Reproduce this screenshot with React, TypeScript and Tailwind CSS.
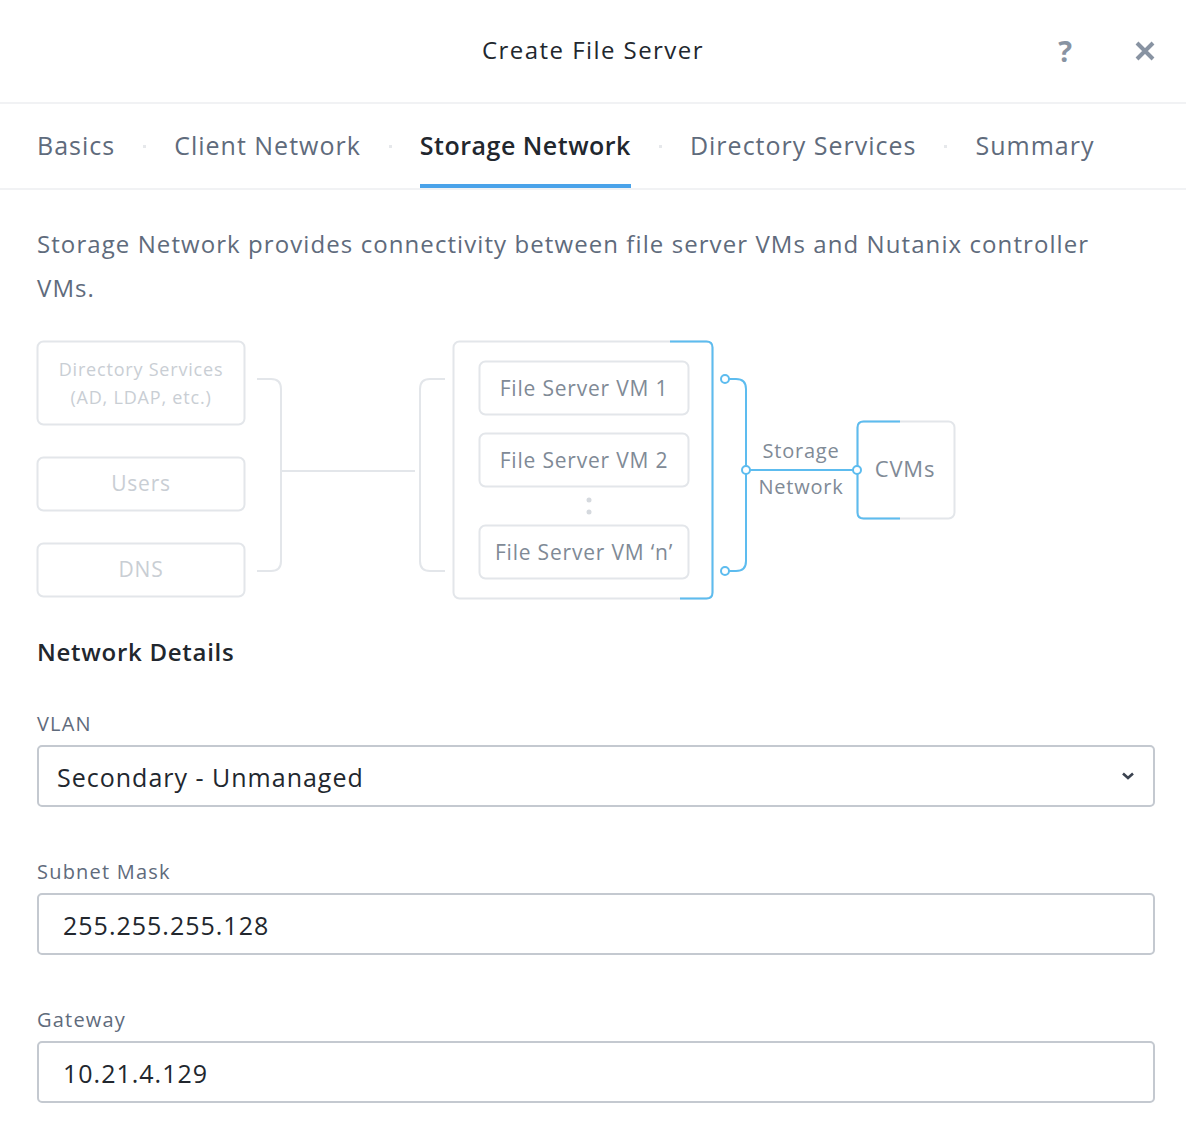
const FONT = "font-['Open_Sans',sans-serif]";

const tabs = ["Basics", "Client Network", "Storage Network", "Directory Services", "Summary"];

function Diagram() {
  const gray = "#e3e6ea";
  const blue = "#5dbcef";
  const boxText = "#c9ced4";
  const vmText = "#808a96";
  return (
    <svg
      width="930"
      height="266"
      viewBox="36 338 930 266"
      className="block tracking-[0.05em]"
      fontFamily="'Open Sans', sans-serif"
    >
      {/* left inputs */}
      <rect x="37.5" y="341.5" width="207" height="83" rx="6" fill="none" stroke={gray} strokeWidth="2" />
      <text x="141" y="376" textAnchor="middle" fontSize="18" fill={boxText}>Directory Services</text>
      <text x="141" y="404" textAnchor="middle" fontSize="18" fill={boxText}>(AD, LDAP, etc.)</text>
      <rect x="37.5" y="457.5" width="207" height="53" rx="6" fill="none" stroke={gray} strokeWidth="2" />
      <text x="141" y="491" textAnchor="middle" fontSize="21" fill={boxText}>Users</text>
      <rect x="37.5" y="543.5" width="207" height="53" rx="6" fill="none" stroke={gray} strokeWidth="2" />
      <text x="141" y="577" textAnchor="middle" fontSize="21" fill={boxText}>DNS</text>

      {/* brackets */}
      <path d="M257 379 H271 Q281 379 281 389 V561 Q281 571 271 571 H257" fill="none" stroke={gray} strokeWidth="2" />
      <path d="M281 471 H415" fill="none" stroke={gray} strokeWidth="2" />
      <path d="M445 379 H430 Q420 379 420 389 V561 Q420 571 430 571 H445" fill="none" stroke={gray} strokeWidth="2" />

      {/* file server group */}
      <rect x="453.5" y="341.5" width="259" height="257" rx="6" fill="none" stroke={gray} strokeWidth="2" />
      <path d="M670 341.5 H706.5 Q712.5 341.5 712.5 347.5 V592.5 Q712.5 598.5 706.5 598.5 H680" fill="none" stroke={blue} strokeWidth="2" />
      {[
        { y: 361.5, label: "File Server VM 1" },
        { y: 433.5, label: "File Server VM 2" },
        { y: 525.5, label: "File Server VM \u2018n\u2019" },
      ].map((b) => (
        <g key={b.label}>
          <rect x="479.5" y={b.y} width="209" height="53" rx="6" fill="none" stroke={gray} strokeWidth="2" />
          <text x="584" y={b.y + 34} textAnchor="middle" fontSize="21" fill={vmText}>{b.label}</text>
        </g>
      ))}
      <circle cx="589" cy="500" r="2.5" fill="#d5d9de" />
      <circle cx="589" cy="512" r="2.5" fill="#d5d9de" />

      {/* storage network */}
      <path d="M729 379 H736 Q746 379 746 389 V561 Q746 571 736 571 H729" fill="none" stroke={blue} strokeWidth="2" />
      <circle cx="725" cy="379" r="4" fill="#fff" stroke={blue} strokeWidth="2" />
      <circle cx="725" cy="571" r="4" fill="#fff" stroke={blue} strokeWidth="2" />
      <path d="M750 470 H853" fill="none" stroke={blue} strokeWidth="2" />
      <text x="801" y="458" textAnchor="middle" fontSize="20" fill={vmText}>Storage</text>
      <text x="801" y="494" textAnchor="middle" fontSize="20" fill={vmText}>Network</text>

      {/* CVMs */}
      <rect x="857.5" y="421.5" width="97" height="97" rx="6" fill="none" stroke={gray} strokeWidth="2" />
      <path d="M900 421.5 H863.5 Q857.5 421.5 857.5 427.5 V512.5 Q857.5 518.5 863.5 518.5 H900" fill="none" stroke={blue} strokeWidth="2" />
      <text x="905" y="477" textAnchor="middle" fontSize="22" fill={vmText}>CVMs</text>
      <circle cx="746" cy="470" r="4" fill="#fff" stroke={blue} strokeWidth="2" />
      <circle cx="857" cy="470" r="4" fill="#fff" stroke={blue} strokeWidth="2" />
    </svg>
  );
}

function Field({ label, value, select }: { label: string; value: string; select?: boolean }) {
  return (
    <div className="flex flex-col">
      <label className="text-[20px] leading-[24px] tracking-[0.06em] text-[#5f6b7c] mb-[9px]">{label}</label>
      <div className="h-[62px] rounded-[5px] border-2 border-[#c4c9d0] flex items-center justify-between">
        <span className={`text-[25px] tracking-[0.04em] text-[#22272e] pt-[3px] ${select ? "pl-[18px]" : "pl-[24px]"}`}>
          {value}
        </span>
        {select && (
          <svg width="14" height="10" viewBox="0 0 14 10" className="mr-[18px]">
            <path d="M2 2.5 L7 7 L12 2.5" fill="none" stroke="#3b4350" strokeWidth="2.6" />
          </svg>
        )}
      </div>
    </div>
  );
}

export default function App() {
  return (
    <div className={`w-[1186px] h-[1128px] bg-white overflow-hidden ${FONT}`}>
      {/* header */}
      <div className="h-[104px] border-b-2 border-[#f1f2f4] flex items-center relative">
        <h1 className="w-full text-center text-[24px] tracking-[0.06em] text-[#22272e] pb-[2px]">Create File Server</h1>
        <div className="absolute right-[30px] top-[36px] flex items-center gap-[62px]">
          <span className="text-[29px] font-bold text-[#8893a2] leading-none">?</span>
          <svg width="22" height="22" viewBox="0 0 22 22">
            <path d="M3 3 L19 19 M19 3 L3 19" stroke="#8893a2" strokeWidth="4" />
          </svg>
        </div>
      </div>

      {/* tabs */}
      <div className="h-[86px] border-b-2 border-[#f1f2f4] flex items-stretch pl-[37px]">
        {tabs.map((t, i) => (
          <div key={t} className="flex items-stretch">
            {i > 0 && (
              <div className="w-[59px] flex items-center justify-center">
                <span className="w-[3px] h-[3px] bg-[#e6e8eb]" />
              </div>
            )}
            <div
              className={`flex items-center text-[25px] border-b-4 ${
                t === "Storage Network"
                  ? "text-[#22272e] border-[#4aa3ea] font-semibold tracking-[0.02em]"
                  : "text-[#5f6b7c] border-transparent tracking-[0.04em]"
              }`}
            >
              <span className="pt-[4px]">{t}</span>
            </div>
          </div>
        ))}
      </div>

      {/* body */}
      <div className="pl-[37px] pr-[31px]">
        <p className="max-w-[1100px] text-[24px] leading-[44px] tracking-[0.045em] text-[#5f6b7c] pt-[32px]">
          Storage Network provides connectivity between file server VMs and Nutanix controller VMs.
        </p>
        <div className="mt-[28px] -ml-[1px]">
          <Diagram />
        </div>

        <h2 className="mt-[33px] text-[24px] font-semibold tracking-[0.03em] text-[#22272e] leading-[30px]">
          Network Details
        </h2>

        <div className="mt-[45px] flex flex-col gap-[53px]">
          <Field label="VLAN" value="Secondary - Unmanaged" select />
          <Field label="Subnet Mask" value="255.255.255.128" />
          <Field label="Gateway" value="10.21.4.129" />
        </div>
      </div>
    </div>
  );
}
